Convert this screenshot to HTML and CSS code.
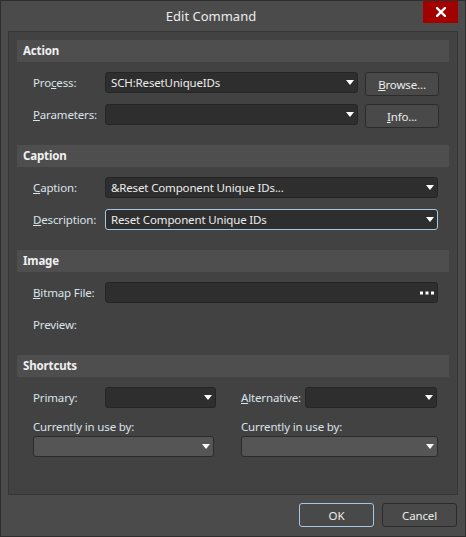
FILE: index.html
```html
<!DOCTYPE html>
<html>
<head>
<meta charset="utf-8">
<link rel="stylesheet" href="styles.css">
</head>
<body>
<div class="window">
  <div class="titlebar">
    <span class="title">Edit Command</span>
    <div class="close"><svg width="10" height="10" viewBox="0 0 10 10"><path d="M1 1 L9 9 M9 1 L1 9" stroke="#fff" stroke-width="2.4" stroke-linecap="square"/></svg></div>
  </div>
  <div class="panel">
    <div class="section">
      <div class="sec-head">Action</div>
      <div class="sec-body">
        <div class="row">
          <label class="lbl">Pro<u>c</u>ess:</label>
          <div class="combo w-proc"><span class="val">SCH:ResetUniqueIDs</span><i class="arrow"></i></div>
          <button class="btn"><u>B</u>rowse...</button>
        </div>
        <div class="row">
          <label class="lbl"><u>P</u>arameters:</label>
          <div class="combo w-proc"><span class="val"></span><i class="arrow"></i></div>
          <button class="btn"><u>I</u>nfo...</button>
        </div>
      </div>
    </div>
    <div class="section">
      <div class="sec-head">Caption</div>
      <div class="sec-body">
        <div class="row">
          <label class="lbl"><u>C</u>aption:</label>
          <div class="combo w-full"><span class="val">&amp;Reset Component Unique IDs...</span><i class="arrow"></i></div>
        </div>
        <div class="row">
          <label class="lbl"><u>D</u>escription:</label>
          <div class="combo w-full focus"><span class="val">Reset Component Unique IDs</span><i class="arrow"></i></div>
        </div>
      </div>
    </div>
    <div class="section">
      <div class="sec-head">Image</div>
      <div class="sec-body">
        <div class="row">
          <label class="lbl"><u>B</u>itmap File:</label>
          <div class="combo w-full"><span class="val"></span><svg class="dots" width="14" height="4" viewBox="0 0 14 4"><rect x="0" y="0.5" width="3" height="3" fill="#fff"/><rect x="5.5" y="0.5" width="3" height="3" fill="#fff"/><rect x="11" y="0.5" width="3" height="3" fill="#fff"/></svg></div>
        </div>
        <div class="row">
          <label class="lbl">Preview:</label>
        </div>
      </div>
    </div>
    <div class="section">
      <div class="sec-head">Shortcuts</div>
      <div class="sec-body shortcuts">
        <div class="col col-left">
          <div class="row">
            <label class="lbl">Primary:</label>
            <div class="combo w-prim"><span class="val"></span><i class="arrow"></i></div>
          </div>
          <div class="use-lbl">Currently in use by:</div>
          <div class="combo light w-use-l"><span class="val"></span><i class="arrow"></i></div>
        </div>
        <div class="col col-right">
          <div class="row">
            <label class="lbl lbl-alt"><u>A</u>lternative:</label>
            <div class="combo w-alt"><span class="val"></span><i class="arrow"></i></div>
          </div>
          <div class="use-lbl">Currently in use by:</div>
          <div class="combo light w-use-r"><span class="val"></span><i class="arrow"></i></div>
        </div>
      </div>
    </div>
  </div>
  <div class="footer">
    <button class="btn btn-foot ok">OK</button>
    <button class="btn btn-foot">Cancel</button>
  </div>
</div>
</body>
</html>
```

FILE: styles.css
```css
* { box-sizing: border-box; }
html, body { margin: 0; padding: 0; background: #4b4b4b; }
body {
  font-family: "Noto Sans", "Open Sans", sans-serif;
  font-size: 11.5px;
  letter-spacing: -0.15px;
  color: #e4e4e4;
}
.window {
  width: 466px;
  height: 537px;
  border: 1px solid #2e2e2e;
  background: #4b4b4b;
  display: flex;
  flex-direction: column;
}
.titlebar {
  position: relative;
  height: 30px;
  display: flex;
  align-items: center;
  justify-content: center;
  padding-right: 44px;
  flex: none;
}
.title {
  font-size: 13px;
  letter-spacing: 0;
  color: #ececec;
}
.close {
  position: absolute;
  top: 0;
  right: 7px;
  width: 35px;
  height: 22px;
  background: #a30000;
  display: flex;
  align-items: center;
  justify-content: center;
}
.panel {
  margin: 0 7px;
  height: 464px;
  flex: none;
  border: 1px solid #363636;
  background: #424242;
  padding: 8px;
}
.sec-head {
  height: 22px;
  background: #4e4e4e;
  font-weight: bold;
  line-height: 22px;
  padding-left: 6px;
  color: #f0f0f0;
}
.sec-body {
  padding: 10px 16px 17px 16px;
  display: flex;
  flex-direction: column;
  gap: 8px;
}
.row {
  display: flex;
  align-items: flex-start;
  height: 24px;
}
.lbl {
  width: 72px;
  flex: none;
  line-height: 21px;
  color: #dbe3ea;
  white-space: nowrap;
}
.lbl-alt { width: 64px; }
.combo {
  position: relative;
  height: 21px;
  flex: none;
  background: #2e2e2e;
  border: 1px solid #252525;
  border-radius: 3px;
  display: flex;
  align-items: center;
  padding-left: 5px;
}
.combo.focus { border-color: #a6c6e6; }
.combo.light { background: #555555; border-color: #2b2b2b; }
.val { color: #ececec; white-space: nowrap; flex: 1; }
.arrow {
  width: 0;
  height: 0;
  border-left: 4px solid transparent;
  border-right: 4px solid transparent;
  border-top: 5px solid #ffffff;
  margin-right: 3px;
  flex: none;
}
.dots { margin-right: 3px; flex: none; }
.w-proc { width: 253px; }
.w-full { width: 333px; }
.w-prim { width: 111px; }
.w-alt { width: 132px; }
.w-use-l { width: 181px; }
.w-use-r { width: 197px; }
.btn {
  font-family: inherit;
  font-size: 11.5px;
  letter-spacing: -0.15px;
  color: #ececec;
  background: #494949;
  border: 1px solid #2b2b2b;
  border-radius: 3px;
  height: 24px;
  width: 74px;
  padding: 0;
  margin-left: 7px;
  flex: none;
}
.shortcuts {
  flex-direction: row;
  gap: 25px;
}
.col { display: flex; flex-direction: column; }
.col-left { width: 183px; }
.col-right { width: 197px; }
.use-lbl {
  margin-top: 8px;
  height: 17px;
  line-height: 16px;
  color: #dbe3ea;
}
.footer {
  display: flex;
  justify-content: flex-end;
  gap: 8px;
  padding: 8px 8px 0 0;
}
.btn-foot { width: 75px; margin-left: 0; }
.btn-foot.ok { border-color: #a6c6e6; }
```
